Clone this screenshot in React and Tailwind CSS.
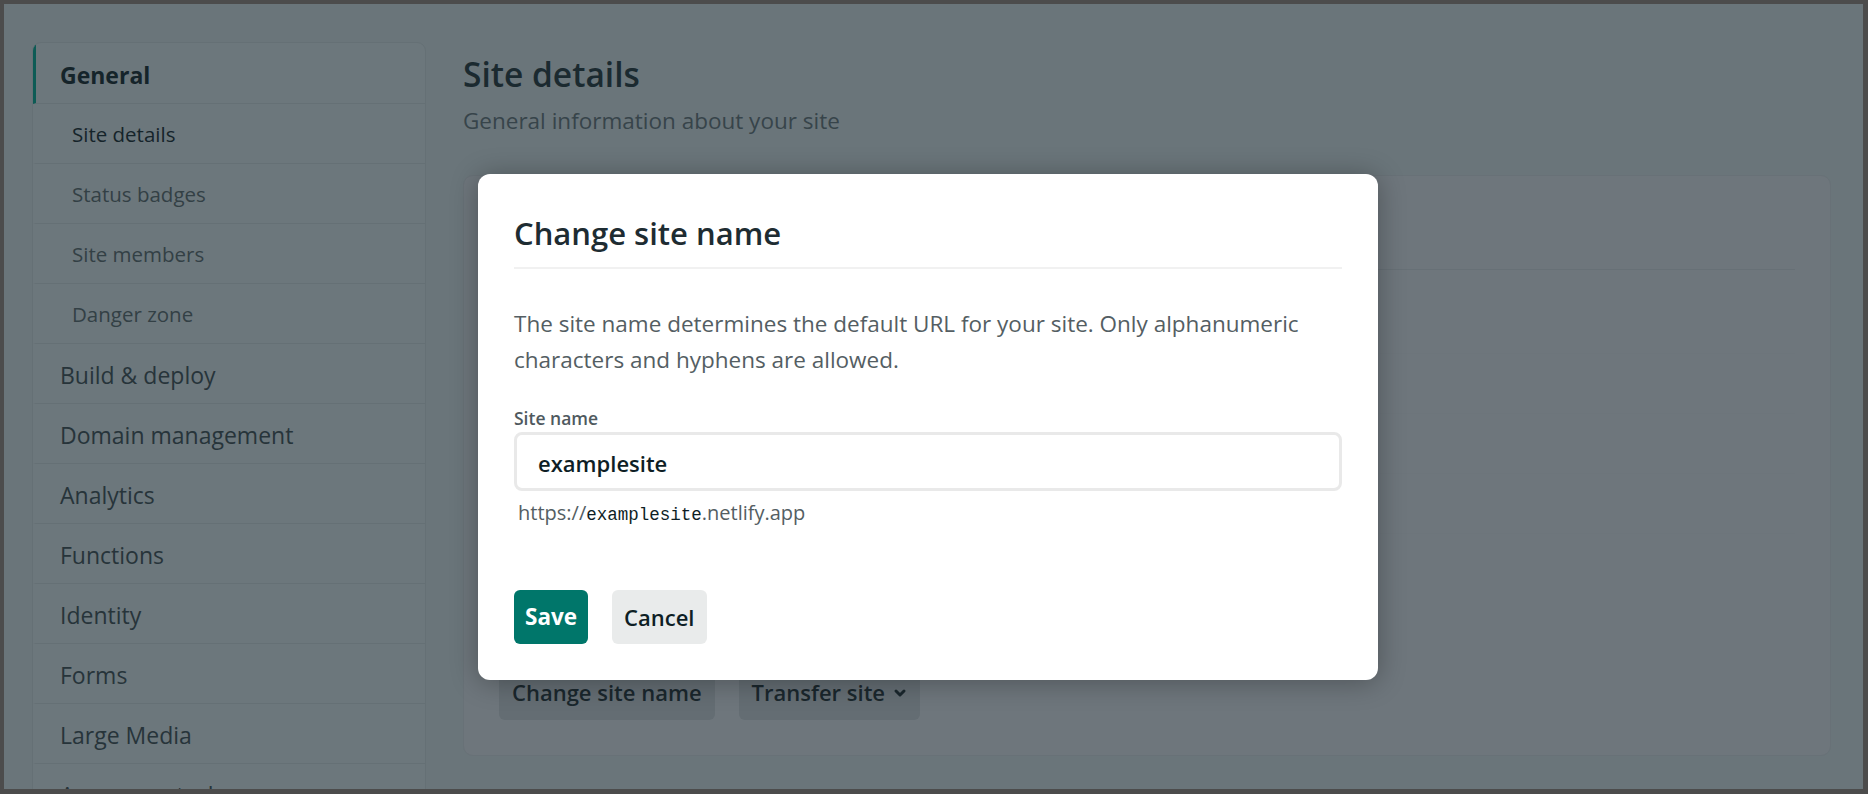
import React from "react";

const subItems = ["Site details", "Status badges", "Site members", "Danger zone"];
const mainItems = [
  "Build & deploy",
  "Domain management",
  "Analytics",
  "Functions",
  "Identity",
  "Forms",
  "Large Media",
  "Access control",
  "Logs",
];

function Chevron() {
  return (
    <svg width="14" height="14" viewBox="0 0 14 14" className="ml-[8px]" aria-hidden="true">
      <path d="M3 5 L7 9 L11 5" fill="none" stroke="#1a272d" strokeWidth="3" strokeLinecap="round" strokeLinejoin="round" />
    </svg>
  );
}

export default function App() {
  return (
    <div className="relative h-[794px] w-full overflow-hidden border-t-4 border-l-4 border-r-[5px] border-b-[5px] border-[#4c4c4c] bg-[#6a757a] font-['Open_Sans','Noto_Sans',sans-serif]">
      <div className="flex gap-[37px] pl-[28px] pr-[32px] pt-[38px]">
        {/* Sidebar */}
        <nav className="w-[394px] shrink-0 overflow-hidden rounded-[9px] border border-[#657075] bg-[#6c777c]">
          <div className="flex h-[61px] items-center border-b border-l-[3px] border-b-[#657075] border-l-[#0d5b55] pl-[24px] pt-[4px] text-[23px] font-bold text-[#15242a]">
            General
          </div>
          {subItems.map((s, i) => (
            <div
              key={s}
              className={
                "flex h-[60px] items-center border-b border-l-[3px] border-b-[#657075] border-l-transparent pl-[36px] pt-[2px] text-[20.5px] " +
                (i === 0 ? "text-[#15242a]" : "text-[#334045]")
              }
            >
              {s}
            </div>
          ))}
          {mainItems.map((s) => (
            <div
              key={s}
              className="flex h-[60px] items-center border-b border-l-[3px] border-b-[#657075] border-l-transparent pl-[24px] pt-[4px] text-[23px] text-[#27343a]"
            >
              {s}
            </div>
          ))}
        </nav>

        {/* Main */}
        <main className="min-w-0 flex-1">
          <h1 className="mt-[11px] text-[33.5px] leading-[42px] font-semibold text-[#1b2a30]">Site details</h1>
          <p className="mt-[9px] text-[22.5px] leading-[34.5px] text-[#37444a]">General information about your site</p>

          <section className="mt-[36px] rounded-[10px] border border-[#687177] bg-[#6e767c] px-[35px] pt-[35px] pb-[35px]">
            <div className="h-[59px] border-b border-[#677076]" />
            <div className="mt-[24px]">
              <div className="h-[60px] border-b border-[#6d757b]" />
              <div className="h-[60px] border-b border-[#6d757b]" />
              <div className="h-[60px] border-b border-[#6d757b]" />
              <div className="h-[60px] border-b border-[#6d757b]" />
              <div className="h-[60px]" />
            </div>
            <div className="mt-[72px] flex gap-[24px]">
              <button className="flex h-[54px] items-center rounded-[6px] bg-[#646d73] px-[13px] text-[22px] font-semibold text-[#1a272d]">
                Change site name
              </button>
              <button className="flex h-[54px] items-center rounded-[6px] bg-[#646d73] px-[13px] text-[22px] font-semibold text-[#1a272d]">
                Transfer site
                <Chevron />
              </button>
            </div>
          </section>
        </main>
      </div>

      {/* Modal */}
      <div className="absolute left-[474px] top-[170px] w-[900px] rounded-[12px] bg-white p-[36px] shadow-[0_2px_28px_rgba(0,0,0,0.3)]">
        <h3 className="border-b-2 border-[#f1f1f1] pt-[1px] pb-[11px] text-[31px] leading-[45px] font-semibold text-[#1e2c32]">
          Change site name
        </h3>
        <p className="mt-[37px] text-[22.5px] leading-[36px] text-[#545e63]">
          The site name determines the default URL for your site. Only alphanumeric characters and hyphens are allowed.
        </p>
        <label htmlFor="site-name" className="mt-[27px] block text-[17.5px] leading-[27px] font-semibold text-[#4f595e]">
          Site name
        </label>
        <input
          id="site-name"
          readOnly
          value="examplesite"
          className="block h-[59px] w-full rounded-[8px] border-[3px] border-[#e9e9e9] pl-[21px] pt-[2px] text-[22px] font-semibold text-[#0e1e25] outline-none"
        />
        <p className="ml-[4px] mt-[6px] text-[20px] leading-[31px] text-[#545e63]">
          https://<span className="font-['Liberation_Mono',monospace] text-[17.5px] text-[#0e1e25]">examplesite</span>.netlify.app
        </p>
        <div className="mt-[59px] flex gap-[24px]">
          <button className="flex h-[54px] items-center rounded-[6px] bg-[#00766a] px-[11px] text-[22.5px] font-bold text-white">
            Save
          </button>
          <button className="flex h-[54px] items-center rounded-[6px] bg-[#e9ebeb] px-[12px] text-[22px] font-semibold text-[#0e1e25]">
            Cancel
          </button>
        </div>
      </div>
    </div>
  );
}
